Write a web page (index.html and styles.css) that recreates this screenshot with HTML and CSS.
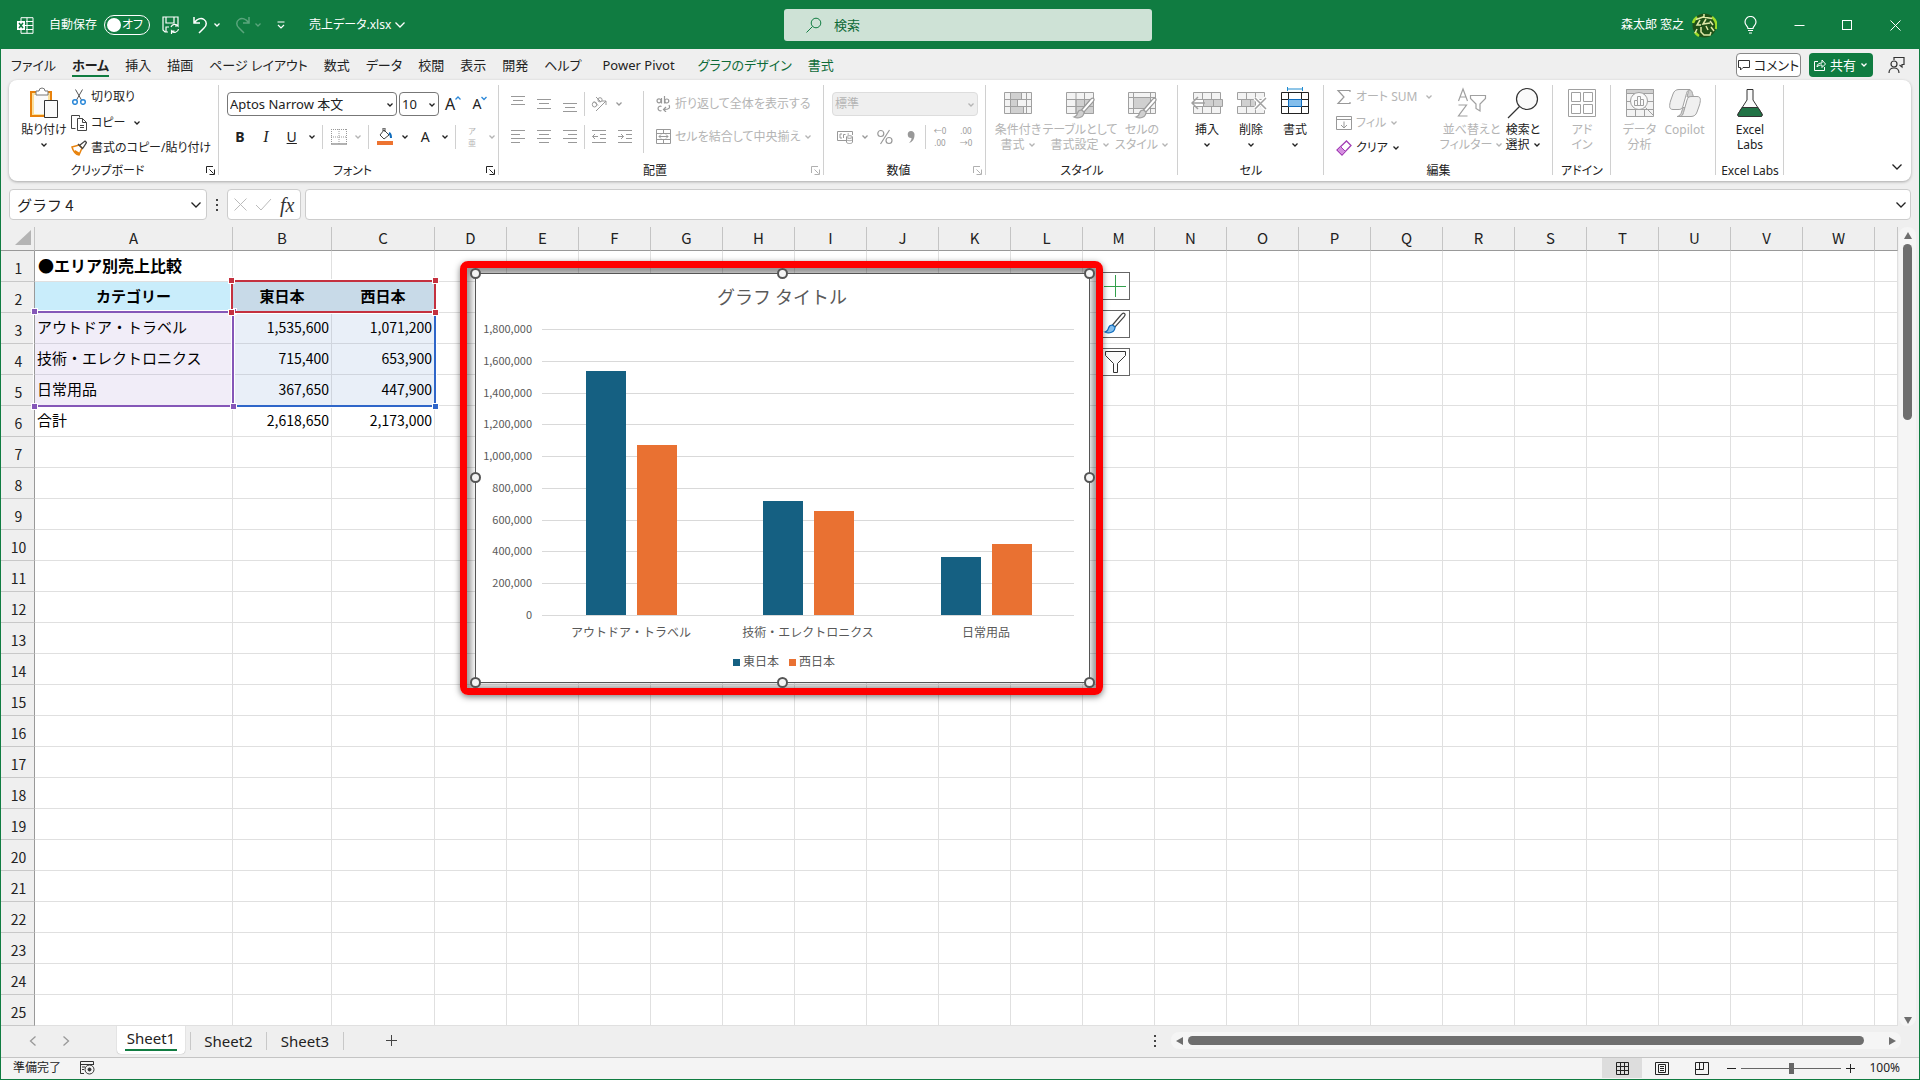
FILE: index.html
```html
<!DOCTYPE html>
<html lang="ja">
<head>
<meta charset="utf-8">
<meta name="viewport" content="width=device-width, initial-scale=1">
<title>売上データ.xlsx</title>
<link rel="stylesheet" href="styles.css">
</head>
<body>
<svg class="defs" aria-hidden="true">
  <symbol id="chev" viewBox="0 0 8 8"><path d="M1.5 2.5 4 5l2.5-2.5" fill="none" stroke="currentColor" stroke-width="1.3"/></symbol>
  <symbol id="chev-lg" viewBox="0 0 12 12"><path d="M1.5 3.5 6 8l4.500-4.500" fill="none" stroke="currentColor" stroke-width="1.3"/></symbol>
  <symbol id="launch" viewBox="0 0 9 9"><path d="M.5 7V.5H7M3.500 3.500l4 4M8.500 3.500v5h-5" fill="none" stroke="currentColor"/></symbol>
  <symbol id="brush" viewBox="0 0 24 24"><path d="M21.500 1.500c1 .8.600 2-.5 3.300L12 15l-2.500-2L18 3c1-1.300 2.500-2.200 3.500-1.500z" fill="#fff" stroke="currentColor" stroke-width="1.200"/><path d="M9.500 13c-2 0-3.500 1-4 3-.4 2-1.500 3.500-3.500 4 4 2 10 .5 10-5z" class="tip" stroke-width="1.200"/></symbol>
</svg>
<div class="window">

<header class="titlebar">
  <div class="title-left">
    <svg class="app-icon" width="17" height="17" viewBox="0 0 17 17" fill="none" stroke="#fff"><path d="M4 4V.7h12v15.600H4V13M10 .7v15.600M4 8.500h12M9 4.500h7M9 12.500h7"/><path d="M0 4h8v9H0z" fill="#fff" stroke="none"/><path d="m2 6 4 5M6 6l-4 5" stroke="#107c41" stroke-width="1.500"/></svg>
    <label class="autosave">自動保存<span class="toggle"><input type="checkbox" class="toggle-box"><span class="toggle-text">オフ</span></span></label>
    <button class="tb-btn save" aria-label="保存"><svg width="18" height="18" viewBox="0 0 18 18" fill="none" stroke="#fff" stroke-width="1.200"><path d="M6 16H3L1 14V1h15v6M4 1v6h8V1M4 16v-5h3M9 11a4 4 0 0 1 7-1v-3m0 3h-3M16.500 13a4 4 0 0 1-7 2v3m0-3h3"/></svg></button>
    <button class="tb-btn undo" aria-label="元に戻す"><svg width="18" height="18" viewBox="0 0 18 18" fill="none" stroke="#fff" stroke-width="1.500"><path d="M2 1v6h6M2 7c3-4 7-5.500 10-3.500s3 6 0 8.500l-5 5"/></svg><svg width="8" height="8"><use href="#chev"/></svg></button>
    <button class="tb-btn redo" aria-label="やり直し" disabled><svg width="18" height="18" viewBox="0 0 18 18" fill="none" stroke="currentColor" stroke-width="1.500"><path d="M16 1v6h-6M16 7c-3-4-7-5.500-10-3.500s-3 6 0 8.500l5 5"/></svg><svg width="8" height="8"><use href="#chev"/></svg></button>
    <button class="tb-btn custom" aria-label="クイック アクセス ツール バーのカスタマイズ"><svg width="8" height="8" viewBox="0 0 8 8" fill="none" stroke="#fff" stroke-width="1.200"><path d="M.5 1h7M1 4l3 3 3-3"/></svg></button>
    <button class="tb-btn filename">売上データ.xlsx<svg width="12" height="12"><use href="#chev-lg"/></svg></button>
  </div>
  <label class="search"><svg width="16" height="16" viewBox="0 0 16 16" fill="none" stroke="#107c41"><circle cx="10" cy="6" r="4.800"/><path d="m6.500 9.500-6 6"/></svg><input type="search" placeholder="検索" aria-label="検索"></label>
  <div class="title-right">
    <span class="user">森太郎 窓之</span>
    <svg class="avatar" width="25" height="25" viewBox="0 0 25 25"><circle cx="12.500" cy="12.500" r="12" fill="#1f5117"/><path d="M1 10a12 12 0 0 1 4-6M20 4a12 12 0 0 1 4 12M3 19a12 12 0 0 0 4 4" fill="none" stroke="#9fdc2a" stroke-width="2.500"/><g fill="none" stroke="#dfe9a8" stroke-width="1.500"><path d="M12 1v3M4 6.500 11 4l9 1.500M8 7l-3 5h4M14 6l-3 5 7-1M18 8l3 4M5 16l-2 4M9 14v5l3 3h6l1-3M14 13l2 4M19 14l3 4"/></g></svg>
    <button class="win-btn" aria-label="ヒント"><svg width="14" height="18" viewBox="0 0 14 18" fill="none" stroke="#fff" stroke-width="1.200"><path d="M4 12.500c0-2.500-3-3-3-6.500a5.500 5.500 0 0 1 11 0c0 3.500-3 4-3 6.500zM4 14.500h5M5 17h3"/></svg></button>
    <button class="win-btn" aria-label="最小化"><svg width="11" height="11" viewBox="0 0 11 11" stroke="#fff"><path d="M.5 5.500h10"/></svg></button>
    <button class="win-btn" aria-label="最大化"><svg width="11" height="11" viewBox="0 0 11 11" fill="none" stroke="#fff"><rect x=".5" y=".5" width="9" height="9"/></svg></button>
    <button class="win-btn" aria-label="閉じる"><svg width="11" height="11" viewBox="0 0 11 11" stroke="#fff"><path d="m.5.5 10 10m0-10-10 10"/></svg></button>
  </div>
</header>

<nav class="tabs">
  <a href="#">ファイル</a><a href="#" class="active">ホーム</a><a href="#">挿入</a><a href="#">描画</a><a href="#">ページ レイアウト</a><a href="#">数式</a><a href="#">データ</a><a href="#">校閲</a><a href="#">表示</a><a href="#">開発</a><a href="#">ヘルプ</a><a href="#" class="latin">Power Pivot</a><a href="#" class="context">グラフのデザイン</a><a href="#" class="context">書式</a>
  <div class="tabs-right">
    <button class="comment"><svg width="12" height="12" viewBox="0 0 12 12" fill="none" stroke="#333"><path d="M.5 1.500h11v7H5l-2.500 2.500V8.500h-2z"/></svg>コメント</button>
    <button class="share"><svg width="12" height="12" viewBox="0 0 12 12" fill="none" stroke="#fff"><path d="M4 2.500H.5v9h10V8M3 8c0-3 2-4 5-4V1l3.500 4L8 8.500V6C6 6 4 6.500 3 8z"/></svg>共有<svg width="8" height="8"><use href="#chev"/></svg></button>
    <button class="person" aria-label="プレゼンス"><svg width="17" height="18" viewBox="0 0 17 18" fill="none" stroke="#333" stroke-width="1.200"><path d="M6 4V1.500h10v7h-2V11l-2.500-2"/><circle cx="6" cy="8" r="3"/><path d="M1 17c0-3.500 2-5 5-5s5 1.500 5 5"/></svg></button>
  </div>
</nav>

<section class="ribbon">
  <div class="group clipboard">
    <div class="group-body">
      <button class="big"><svg width="32" height="32" viewBox="0 0 32 32"><path d="M3 5h20v24H3z" fill="#fbdf9b" stroke="#e8820c" stroke-width="2"/><path d="M6 8h14v19H6z" fill="#fafafa"/><path d="M8 8V4h3a3 3 0 0 1 6 0h3v4z" fill="#fff" stroke="#777"/><path d="M16.500 13.500h13v17h-13z" fill="#fafafa" stroke="#333"/></svg><span>貼り付け</span><svg width="8" height="8"><use href="#chev"/></svg></button>
      <div class="rows3">
        <button class="small"><svg width="16" height="16" viewBox="0 0 16 16" fill="none"><path d="m4.500.5 6 10.500M11.500.5 5.500 11" stroke="#555"/><circle cx="4" cy="13" r="2.300" stroke="#2b88d8" stroke-width="1.500"/><circle cx="12" cy="13" r="2.300" stroke="#2b88d8" stroke-width="1.500"/></svg>切り取り</button>
        <button class="small"><svg width="16" height="16" viewBox="0 0 16 16" fill="none" stroke="#444"><path d="M4.500 13.500h-4V.5h8v2M6.500 3.500h5l4 4v8h-9zM11.500 3.500v4h4M9 10.500h4M9 12.500h4"/></svg>コピー<svg class="gap-chev" width="8" height="8"><use href="#chev"/></svg></button>
        <button class="small"><svg width="16" height="16" viewBox="0 0 16 16"><path d="m1 7 7-2 3 3-3 7c-3 0-6-4-7-8z" fill="#fff" stroke="#e8820c" stroke-width="1.500"/><path d="m4 10 5 3-1 2-5-3z" fill="#e8820c"/><path d="m7 4 5 5M9 5l5-4 1.500 1.500L12 8" fill="none" stroke="#444" stroke-width="1.300"/></svg>書式のコピー/貼り付け</button>
      </div>
    </div>
    <div class="group-label has-launch"><span>クリップボード</span><button aria-label="クリップボードの設定"><svg width="9" height="9"><use href="#launch"/></svg></button></div>
  </div>

  <div class="group font">
    <div class="group-body rows2">
      <div class="line">
        <span class="combo font-name"><select aria-label="フォント"><option>Aptos Narrow 本文</option></select><svg width="8" height="8"><use href="#chev"/></svg></span>
        <span class="combo font-size"><select aria-label="フォント サイズ"><option>10</option></select><svg width="8" height="8"><use href="#chev"/></svg></span>
        <button class="ico grow">A<svg width="6" height="5" viewBox="0 0 6 5" fill="none" stroke="#2b88d8" stroke-width="1.300"><path d="m.5 3.500 2.500-2.500 2.500 2.500"/></svg></button>
        <button class="ico shrink">A<svg width="6" height="5" viewBox="0 0 6 5" fill="none" stroke="#2b88d8" stroke-width="1.300"><path d="m.5 1 2.500 2.500L5.500 1"/></svg></button>
      </div>
      <div class="line">
        <button class="ico"><b>B</b></button>
        <button class="ico italic"><i>I</i></button>
        <button class="ico"><u>U</u></button>
        <button class="dd" aria-label="下線"><svg width="8" height="8"><use href="#chev"/></svg></button>
        <i class="sep"></i>
        <button class="ico off" disabled aria-label="罫線"><svg width="16" height="16" viewBox="0 0 16 16" fill="none" stroke="#999"><path d="M.5 0v15M15.500 0v15M0 .5h16M0 8h16M8 0v15" stroke-dasharray="1 1"/><path d="M0 15h16" stroke-width="1.500"/></svg></button>
        <button class="dd off" disabled aria-label="罫線の種類"><svg width="8" height="8"><use href="#chev"/></svg></button>
        <i class="sep"></i>
        <button class="ico" aria-label="塗りつぶし"><svg width="16" height="17" viewBox="0 0 16 17"><path d="m7 2 5 5-5 4-4-4zM6 3V0h2v4" fill="none" stroke="#444"/><path d="M12 5c2 1 2 3 2 5" fill="none" stroke="#0f6cbd" stroke-width="2"/><path d="M0 13h16v4H0z" fill="#ed7331"/></svg></button>
        <button class="dd" aria-label="塗りつぶしの色"><svg width="8" height="8"><use href="#chev"/></svg></button>
        <button class="ico">A</button>
        <button class="dd" aria-label="フォントの色"><svg width="8" height="8"><use href="#chev"/></svg></button>
        <i class="sep"></i>
        <button class="ico off ruby" disabled><span>ア</span><span>亜</span></button>
        <button class="dd off" disabled aria-label="ふりがな"><svg width="8" height="8"><use href="#chev"/></svg></button>
      </div>
    </div>
    <div class="group-label has-launch"><span>フォント</span><button aria-label="フォントの設定"><svg width="9" height="9"><use href="#launch"/></svg></button></div>
  </div>

  <div class="group align">
    <div class="group-body">
      <div class="rows2 align-icons off">
        <div class="line">
          <button class="ico" disabled aria-label="上揃え"><svg width="14" height="16" viewBox="0 0 14 16" stroke="currentColor"><path d="M0 .5h14M2 4.500h10M0 8.500h14"/></svg></button>
          <button class="ico" disabled aria-label="上下中央揃え"><svg width="14" height="16" viewBox="0 0 14 16" stroke="currentColor"><path d="M0 3.500h14M2 7.500h10M0 12.500h14"/></svg></button>
          <button class="ico" disabled aria-label="下揃え"><svg width="14" height="16" viewBox="0 0 14 16" stroke="currentColor"><path d="M0 7.500h14M2 11.500h10M0 15.500h14"/></svg></button>
          <i class="sep"></i>
          <button class="ico" disabled aria-label="方向"><svg width="16" height="16" viewBox="0 0 16 16" fill="none" stroke="currentColor"><path d="M5 15 15 5M11 5h4v4"/><ellipse cx="3.500" cy="8.500" rx="2.200" ry="2.500"/><path d="m3 5.500 4 4"/><path d="m5 1 5 5"/><circle cx="9" cy="3.800" r="2.100"/></svg></button>
          <button class="dd" disabled aria-label="方向の種類"><svg width="8" height="8"><use href="#chev"/></svg></button>
        </div>
        <div class="line">
          <button class="ico" disabled aria-label="左揃え"><svg width="14" height="14" viewBox="0 0 14 14" stroke="currentColor"><path d="M0 .5h14M0 4.500h9M0 8.500h14M0 12.500h9"/></svg></button>
          <button class="ico" disabled aria-label="中央揃え"><svg width="14" height="14" viewBox="0 0 14 14" stroke="currentColor"><path d="M0 .5h14M2 4.500h10M0 8.500h14M2 12.500h10"/></svg></button>
          <button class="ico" disabled aria-label="右揃え"><svg width="14" height="14" viewBox="0 0 14 14" stroke="currentColor"><path d="M0 .5h14M5 4.500h9M0 8.500h14M5 12.500h9"/></svg></button>
          <i class="sep"></i>
          <button class="ico" disabled aria-label="インデント減"><svg width="14" height="14" viewBox="0 0 14 14" fill="none" stroke="currentColor"><path d="M0 .5h14M8 4.500h6M8 8.500h6M0 12.500h14M6 6.500H.5M3 4 .5 6.500 3 9"/></svg></button>
          <button class="ico" disabled aria-label="インデント増"><svg width="14" height="14" viewBox="0 0 14 14" fill="none" stroke="currentColor"><path d="M0 .5h14M8 4.500h6M8 8.500h6M0 12.500h14M0 6.500h5.500M3 4l2.500 2.500L3 9"/></svg></button>
        </div>
      </div>
      <div class="rows2 wrap-col off">
        <button class="small" disabled><svg width="15" height="16" viewBox="0 0 15 16" fill="none" stroke="#999" stroke-width="1.200"><circle cx="3" cy="4.800" r="2"/><path d="M5.500 2v5.500M8.500 0v7.500"/><circle cx="10.800" cy="5" r="2"/><path d="M5.500 10.500a2.300 2.300 0 1 0 0 4M13 9c1.500 3 0 4.500-5 4.500M10 11l-2.500 2.500L10 16"/></svg>折り返して全体を表示する</button>
        <button class="small" disabled><svg width="15" height="15" viewBox="0 0 15 15" fill="none" stroke="#999"><path d="M.5.5h14v14H.5zM.5 4.500h14M.5 10.500h14M7.500.5v4M7.500 10.500v4M3 7.500h9M5 5.500l-2 2 2 2M10 5.500l2 2-2 2"/></svg>セルを結合して中央揃え<svg class="gap-chev" width="8" height="8"><use href="#chev"/></svg></button>
      </div>
    </div>
    <div class="group-label has-launch off-launch"><span>配置</span><button aria-label="配置の設定"><svg width="9" height="9"><use href="#launch"/></svg></button></div>
  </div>

  <div class="group number">
    <div class="group-body rows2 off">
      <div class="line"><span class="combo format"><select aria-label="表示形式" disabled><option>標準</option></select><svg width="8" height="8"><use href="#chev"/></svg></span></div>
      <div class="line">
        <button class="ico" disabled aria-label="通貨"><svg width="17" height="14" viewBox="0 0 17 14" fill="none" stroke="currentColor"><path d="M9 10.500H.5v-9h15V5M5 4H3v4h2M6.500 8V4.500h2M10.500 4H12"/><path d="M9.500 7v5c0 2 6 2 6 0V7M9.500 9.500c0 1.500 6 1.500 6 0"/><ellipse cx="12.500" cy="7" rx="3" ry="1.300"/></svg></button>
        <button class="dd" disabled aria-label="通貨の種類"><svg width="8" height="8"><use href="#chev"/></svg></button>
        <button class="ico" disabled aria-label="パーセント"><svg width="16" height="16" viewBox="0 0 16 16" fill="none" stroke="currentColor" stroke-width="1.200"><circle cx="3.800" cy="4.500" r="3"/><circle cx="12" cy="11.500" r="3"/><path d="M12.500 1 3.500 15"/></svg></button>
        <button class="ico" disabled aria-label="桁区切り"><svg width="8" height="14" viewBox="0 0 8 14" fill="currentColor"><path d="M4 1a3.500 3.500 0 0 1 3.500 4c0 4-2 7-5.500 8 2-2 2.500-3.500 2.500-5A3.500 3.500 0 1 1 4 1z"/></svg></button>
        <i class="sep"></i>
        <button class="ico dec" disabled><span>←0</span><span>.00</span></button>
        <button class="ico dec" disabled><span>.00</span><span>→0</span></button>
      </div>
    </div>
    <div class="group-label has-launch off-launch"><span>数値</span><button aria-label="数値の設定"><svg width="9" height="9"><use href="#launch"/></svg></button></div>
  </div>

  <div class="group styles">
    <div class="group-body off">
      <button class="big" disabled><svg width="32" height="32" viewBox="0 0 32 32" fill="none" stroke="#a0a0a0"><path d="M2.500 5.500h27v21h-27z" fill="#f3f3f3"/><path d="M8.500 5.500h11v7h-11zM8.500 12.500h7v7h-7zM8.500 19.500h13v7h-13z" fill="#d0d0d0"/><path d="M24.500 5.500v21M2.500 12.500h27M2.500 19.500h27"/></svg><span>条件付き<br>書式<svg width="8" height="8"><use href="#chev"/></svg></span></button>
      <button class="big" disabled><svg width="32" height="32" viewBox="0 0 32 32" fill="none" stroke="#a0a0a0"><path d="M2.500 5.500h27v21h-27z" fill="#f3f3f3"/><path d="M12 12.500h17.500v14H12z" fill="#d0d0d0"/><path d="M12 5.500v21M20.500 5.500v21M2.500 12.500h27M2.500 19.500h27"/><use href="#brush" class="grey-tip" x="8" y="10" width="24" height="24"/></svg><span>テーブルとして<br>書式設定<svg width="8" height="8"><use href="#chev"/></svg></span></button>
      <button class="big" disabled><svg width="32" height="32" viewBox="0 0 32 32" fill="none" stroke="#a0a0a0"><path d="M2.500 5.500h27v21h-27z" fill="#f3f3f3"/><path d="M7.500 10.500h17v11h-17z" fill="#d0d0d0"/><path d="M7.500 5.500v21M24.500 5.500v21M2.500 10.500h27M2.500 21.500h27"/><use href="#brush" class="grey-tip" x="8" y="10" width="24" height="24"/></svg><span>セルの<br>スタイル<svg width="8" height="8"><use href="#chev"/></svg></span></button>
    </div>
    <div class="group-label"><span>スタイル</span></div>
  </div>

  <div class="group cells">
    <div class="group-body">
      <button class="big"><svg width="32" height="32" viewBox="0 0 32 32" fill="none" stroke="#a0a0a0"><path d="M2.500 5.500h27v7h-27zM2.500 19.500h27v7h-27zM11.500 5.500v7M20.500 5.500v7M11.500 19.500v7M20.500 19.500v7" fill="#f3f3f3"/><path d="M12.500 12.500h19v7h-19zM22.500 12.500v7" fill="#d0d0d0"/><path d="M14 16H1M7 10l-6 6 6 6" stroke-width="1.500"/></svg><span>挿入</span><svg width="8" height="8"><use href="#chev"/></svg></button>
      <button class="big"><svg width="32" height="32" viewBox="0 0 32 32" fill="none" stroke="#a0a0a0"><path d="M2.500 5.500h27v7h-27zM2.500 19.500h27v7h-27zM11.500 5.500v7M20.500 5.500v7M11.500 19.500v7M20.500 19.500v7" fill="#f3f3f3"/><path d="M6.500 12.500h14v7h-14zM15.500 12.500v7" fill="#d0d0d0"/><path d="m20 11 11 11m0-11L20 22" stroke="#fff" stroke-width="4"/><path d="m20 11 11 11m0-11L20 22" stroke-width="1.500"/></svg><span>削除</span><svg width="8" height="8"><use href="#chev"/></svg></button>
      <button class="big"><svg width="32" height="32" viewBox="0 0 32 32" fill="none" stroke="#222"><path d="M2.500 5.500h27v21h-27zM9.500 5.500v21M22.500 5.500v21M2.500 12.500h27M2.500 19.500h27"/><path d="M9.500 12.500h13v7h-13z" fill="#83beec" stroke="#0f6cbd"/><path d="M8.500 2h15M8.500 0v4M23.500 0v4" stroke="#1e8bd0"/></svg><span>書式</span><svg width="8" height="8"><use href="#chev"/></svg></button>
    </div>
    <div class="group-label"><span>セル</span></div>
  </div>

  <div class="group edit">
    <div class="group-body">
      <div class="rows3">
        <button class="small off" disabled><svg width="16" height="16" viewBox="0 0 16 16" fill="none" stroke="#999" stroke-width="1.200"><path d="M14 3V1.500H2L8 8l-6 6.500h12V13"/></svg>オート SUM<svg class="gap-chev" width="8" height="8"><use href="#chev"/></svg></button>
        <button class="small off" disabled><svg width="16" height="16" viewBox="0 0 16 16" fill="none" stroke="#999"><path d="M.5 1.500h15v13H.5zM.5 4.500h15M8 6.500v6M5 10l3 3 3-3"/></svg>フィル<svg width="8" height="8"><use href="#chev"/></svg></button>
        <button class="small"><svg width="16" height="16" viewBox="0 0 16 16"><path d="M10.500 1 15 5.500 6 15 1 10z" fill="#fff" stroke="#a33fb5" stroke-width="1.300"/><path d="m4.500 6.500 5 5L6 15l-5-5z" fill="#d58fe0" stroke="#a33fb5"/></svg>クリア<svg width="8" height="8"><use href="#chev"/></svg></button>
      </div>
      <button class="big off" disabled><svg width="32" height="32" viewBox="0 0 32 32" fill="none" stroke="#a0a0a0" stroke-width="1.200"><path d="m2.500 14 4.500-12 4.500 12M4 10h6M2.500 18h8l-8 11h9M14.500 8.500h15v3L24 17v7l-4-2.500V17l-5.500-5.500z"/></svg><span>並べ替えと<br>フィルター<svg width="8" height="8"><use href="#chev"/></svg></span></button>
      <button class="big"><svg width="32" height="32" viewBox="0 0 32 32" fill="#fafafa" stroke="#333" stroke-width="1.200"><circle cx="20" cy="12" r="10.500"/><path d="M12.500 19.500 1 31"/></svg><span>検索と<br>選択<svg width="8" height="8"><use href="#chev"/></svg></span></button>
    </div>
    <div class="group-label"><span>編集</span></div>
  </div>

  <div class="group addin">
    <div class="group-body off"><button class="big" disabled><svg width="32" height="32" viewBox="0 0 32 32" fill="none" stroke="#a0a0a0"><path d="M2.500 2.500h27v27h-27zM5.500 5.500h9v9h-9zM17.500 5.500h9v9h-9zM5.500 17.500h9v9h-9zM17.500 17.500h9v9h-9z"/></svg><span>アド<br>イン</span></button></div>
    <div class="group-label"><span>アドイン</span></div>
  </div>

  <div class="group analysis">
    <div class="group-body off">
      <button class="big" disabled><svg width="32" height="32" viewBox="0 0 32 32" fill="none" stroke="#a0a0a0"><path d="M2.500 2.500h27v27h-27z" fill="#f3f3f3"/><path d="M2.500 2.500h27v4h-27z" fill="#d0d0d0"/><path d="M2.500 14.500h27M2.500 22.500h27M11.500 22.500v7M20.500 22.500v7"/><circle cx="15" cy="14" r="8.500" fill="#fafafa"/><path d="m21.500 20.500 8 8M10.500 18.500v-5h3v-4h3v3h3v6zM13.500 18.500v-5M16.500 18.500v-6"/></svg><span>データ<br>分析</span></button>
      <button class="big" disabled><svg width="32" height="32" viewBox="0 0 32 32" stroke="#a0a0a0" fill="#f0f0f0"><path d="M8 29.500h12l3-9h-9l-2 6c-1 2-3 3-4 3z" fill="#d0d0d0"/><path d="M10 2.500h11c-2 0-3 2-3.500 4L14 19c-1 3-2 3.500-5 3.500H4C-.5 22.500.5 18 1.500 14L4 7c1-3 3-4.500 6-4.500z"/><path d="M16 2.500h3c3 0 4 1.500 4.500 4L24.500 10H18l1-4c.5-2 1-3.500 2-3.500z" fill="#d0d0d0"/><path d="M22 29.500H11c2 0 3-2 3.500-4L18 13c1-3 2-3.500 5-3.500h5c4.500 0 3.500 4.500 2.500 8.500L28 25c-1 3-3 4.500-6 4.500z"/></svg><span>Copilot</span></button>
    </div>
    <div class="group-label"></div>
  </div>

  <div class="group labs">
    <div class="group-body"><button class="big"><svg width="32" height="32" viewBox="0 0 32 32"><path d="M13 2.500h6V13l9 14c.5 1.500 0 2.500-1.500 2.500h-21C4 29.500 3.500 28.500 4 27l9-14z" fill="#fafafa" stroke="#333"/><path d="M8 20.500h16l4 6.500c.5 1.500 0 2.500-1.500 2.500h-21C4 29.500 3.500 28.500 4 27z" fill="#217346" stroke="#333"/></svg><span>Excel<br>Labs</span></button></div>
    <div class="group-label"><span>Excel Labs</span></div>
  </div>
  <button class="collapse" aria-label="リボンを折りたたむ"><svg width="12" height="12"><use href="#chev-lg"/></svg></button>
</section>

<div class="formula-row">
  <div class="box name-box"><input type="text" value="グラフ 4" aria-label="名前ボックス"><svg width="12" height="12"><use href="#chev-lg"/></svg></div>
  <svg class="grip" width="3" height="13" fill="#444"><path d="M0 1h2v2H0zM0 6h2v2H0zM0 11h2v2H0z"/></svg>
  <div class="box fx-box">
    <svg width="13" height="13" viewBox="0 0 13 13" stroke="#bbb"><path d="m.5.5 12 12m0-12-12 12"/></svg>
    <svg width="17" height="13" viewBox="0 0 17 13" fill="none" stroke="#bbb"><path d="m1 7 5 5L16 1"/></svg>
    <button class="fx">fx</button>
  </div>
  <div class="box formula"><input type="text" aria-label="数式バー"><svg width="12" height="12"><use href="#chev-lg"/></svg></div>
</div>

<main class="work">
  <div class="sheet">
    <table class="grid"><colgroup id="cols"></colgroup><thead><tr id="head"></tr></thead><tbody id="rows"></tbody></table>
    <div class="range blue"><i></i><i></i><i></i><i></i></div>
    <div class="range purple"><i></i><i></i><i></i><i></i></div>
    <div class="range red"><i></i><i></i><i></i><i></i></div>
    <div class="chart-tools">
      <button aria-label="グラフ要素"><svg width="24" height="24" viewBox="0 0 24 24" stroke="#33a04c"><path d="M1 12.500h22M12.500 1v22"/></svg></button>
      <button aria-label="グラフ スタイル"><svg width="24" height="24" viewBox="0 0 24 24" class="blue-tip"><use href="#brush"/></svg></button>
      <button aria-label="グラフ フィルター"><svg width="24" height="24" viewBox="0 0 24 24" fill="#fafafa" stroke="#333"><path d="M2.500 1.500h20v4l-8 8v9h-4v-9l-8-8z"/></svg></button>
    </div>
    <div class="chart-frame">
      <svg class="chart" width="614" height="409" viewBox="0 0 614 409" id="chart"></svg>
    </div>
  </div>
  <div class="vscroll"><i class="arrow up"></i><i class="thumb"></i><i class="arrow down"></i></div>
</main>

<div class="sheetbar">
  <div class="sheet-nav"><button aria-label="前のシート"><svg width="8" height="12" viewBox="0 0 8 12" fill="none" stroke="#999" stroke-width="1.300"><path d="M6.500 1.500 1.500 6l5 4.500"/></svg></button><button aria-label="次のシート"><svg width="8" height="12" viewBox="0 0 8 12" fill="none" stroke="#999" stroke-width="1.300"><path d="m1.500 1.500 5 4.500-5 4.500"/></svg></button></div>
  <button class="sheet-tab current"><span>Sheet1</span></button>
  <button class="sheet-tab">Sheet2</button>
  <button class="sheet-tab">Sheet3</button>
  <button class="add" aria-label="新しいシート"><svg width="11" height="11" viewBox="0 0 11 11" stroke="#444"><path d="M0 5.500h11M5.500 0v11"/></svg></button>
  <svg class="grip" width="3" height="13" fill="#444"><path d="M0 1h2v2H0zM0 6h2v2H0zM0 11h2v2H0z"/></svg>
  <div class="hscroll"><i class="arrow left"></i><i class="thumb"></i><i class="arrow right"></i></div>
</div>

<footer class="status">
  <span>準備完了</span>
  <svg class="macro" width="15" height="14" viewBox="0 0 15 14" fill="none" stroke="#333"><path d="M4 12.500H.5V.5h13V4M.5 3.500h13M2 6h3M2 8.500h2"/><circle cx="9.500" cy="8.500" r="4.500"/><circle cx="9.500" cy="8.500" r="1.500" fill="#333"/></svg>
  <div class="views">
    <button class="on" aria-label="標準"><svg width="13" height="13" viewBox="0 0 13 13" fill="none" stroke="#222"><path d="M.5.5h12v12H.5zM4.500.5v12M8.500.5v12M.5 4.500h12M.5 8.500h12"/></svg></button>
    <button aria-label="ページ レイアウト"><svg width="14" height="13" viewBox="0 0 14 13" fill="none" stroke="#222"><path d="M.5.5h13v12H.5zM3.500 2.500h7v8h-7zM5 4.500h4M5 6.500h4M5 8.500h4"/></svg></button>
    <button aria-label="改ページ プレビュー"><svg width="14" height="13" viewBox="0 0 14 13" fill="none" stroke="#222"><path d="M.5.5h13v12H.5zM.5 7.500h8v-7M4.500.5v7"/></svg></button>
  </div>
  <button class="zoom-btn" aria-label="縮小"><svg width="9" height="9" viewBox="0 0 9 9" stroke="#222"><path d="M0 4.500h9"/></svg></button>
  <input class="zoom" type="range" min="0" max="100" value="50" aria-label="ズーム">
  <button class="zoom-btn" aria-label="拡大"><svg width="9" height="9" viewBox="0 0 9 9" stroke="#222"><path d="M0 4.500h9M4.500 0v9"/></svg></button>
  <span class="percent">100%</span>
</footer>
</div>
<script src="sheet.js"></script>
</body>
</html>
```
FILE: styles.css
```css
* { box-sizing: border-box; }
body { margin: 0; font: 12px/16px "Noto Sans", "Noto Sans CJK JP", sans-serif; color: #222; font-feature-settings: "palt"; }
button, input, select { font: inherit; color: inherit; font-feature-settings: inherit; background: none; border: 0; padding: 0; margin: 0; }
button { display: flex; align-items: center; white-space: nowrap; }
svg { display: block; flex: none; }
i { font-style: normal; }
.defs { display: none; }
.window { min-height: 100vh; display: flex; flex-direction: column; background: #efefef; border: 1px solid #107c41; overflow: hidden; }
.off { color: #b4b4b4; }

/* title bar */
.titlebar { display: grid; grid-template-columns: minmax(0, 1fr) 368px minmax(0, 1fr); height: 48px; padding-left: 16px; background: #107c41; color: #fff; align-items: center; }
.title-left, .title-right { display: flex; align-items: center; }
.autosave { display: flex; align-items: center; gap: 7px; margin-left: 15px; }
.toggle { display: grid; }
.toggle > * { grid-area: 1 / 1; }
.toggle-box { appearance: none; width: 46px; height: 20px; border: 1px solid #fff; border-radius: 10px; }
.toggle-box::before { content: ""; display: block; width: 14px; height: 14px; margin: 2px; border-radius: 50%; background: #fff; }
.toggle-text { align-self: center; justify-self: end; padding-right: 7px; }
.tb-btn { gap: 3px; margin-left: 12px; }
.redo { color: #5aa57c; }
.custom { margin-left: 15px; }
.filename { margin-left: 24px; }
.search { display: flex; align-items: center; gap: 12px; height: 32px; padding-left: 22px; border-radius: 3px; background: #cee2d6; color: #0e6b38; font-size: 13px; }
.search input { flex: 1; min-width: 0; outline: 0; }
.search input::placeholder { color: #0e6b38; opacity: 1; }
.title-right { justify-content: flex-end; }
.avatar { margin: 0 10px 0 8px; }
.win-btn { width: 48px; height: 48px; justify-content: center; }

/* ribbon tabs */
.tabs { display: flex; align-items: center; gap: 16px; height: 31px; padding: 0 14px 0 10px; font-size: 13px; white-space: nowrap; }
.tabs > a { color: inherit; text-decoration: none; line-height: 20px; padding-top: 2px; border-bottom: 2px solid transparent; }
.tabs > a.active { font-weight: bold; border-color: #107c41; }
.tabs > a.context { color: #0e6b38; }
.tabs > a.latin { padding-left: 5px; padding-right: 7px; }
.tabs-right { display: flex; align-items: center; margin-left: auto; }
.comment, .share { height: 24px; gap: 4px; justify-content: center; border-radius: 4px; }
.comment { width: 65px; border: 1px solid #888; background: #fff; }
.share { width: 64px; margin: 0 15px 0 8px; background: #107c41; color: #fff; font-size: 13px; }

/* ribbon */
.ribbon { display: flex; height: 101px; margin: 0 8px; padding: 1px 0; border-radius: 8px; background: #fff; box-shadow: 0 1px 3px rgba(0, 0, 0, .3); position: relative; }
.group { flex: none; display: flex; flex-direction: column; position: relative; }
.group::after { content: ""; position: absolute; right: 0; top: 4px; bottom: 5px; width: 1px; background: #d0d0d0; }
.group-body { display: flex; height: 80px; }
.group-label { display: flex; align-items: center; height: 19px; }
.group-label span { flex: 1; text-align: center; }
.has-launch { padding-right: 3px; }
.has-launch button { width: 10px; }
.off-launch button { color: #b0b0b0; }
.clipboard { width: 210px; }
.font { width: 280px; }
.align { width: 325px; }
.number { width: 162px; }
.styles { width: 192px; }
.cells { width: 146px; }
.edit { width: 229px; }
.addin { width: 58px; }
.analysis { width: 105px; }
.labs { width: 68px; }

.big { flex-direction: column; padding-top: 6px; line-height: 15px; text-align: center; }
.big > span { margin-top: 3px; }
.big > span + svg { margin-top: 4px; }
.big span svg { display: inline-block; margin-left: 3px; }
.rows3 { display: flex; flex-direction: column; padding-top: 3px; }
.small { height: 26px; gap: 4px; }
.rows2 { display: flex; flex-direction: column; padding-top: 6px; }
.rows2 .small, .line { height: 33px; display: flex; align-items: center; }
.gap-chev { margin-left: 4px; }
.clipboard .big { width: 62px; padding-left: 8px; }
.clipboard .small { gap: 4px; }

.rows2 .line { flex: none; }
.font .group-body { padding-left: 8px; }
.combo { position: relative; display: flex; height: 24px; border: 1px solid #777; border-radius: 4px; background: #fff; }
.combo select { appearance: none; width: 100%; padding: 0 14px 0 2px; outline: 0; opacity: 1; }
.combo svg { position: absolute; right: 2px; top: 8px; pointer-events: none; }
.font-name { width: 170px; margin-right: 2px; font-size: 13px; }
.font-size { width: 40px; font-size: 13px; }
.format { width: 146px; background: #efefef; border-color: #ddd; }
.ico { width: 26px; height: 24px; justify-content: center; font-size: 14px; }
.grow { width: 28px; font-size: 16px; }
.grow svg, .shrink svg { align-self: flex-start; margin-top: 4px; }
.italic { font-family: "Liberation Serif", serif; font-size: 16px; }
.italic i { font-style: italic; }
.dd { width: 14px; height: 24px; justify-content: center; }
.sep { width: 1px; height: 24px; margin: 0 3px; background: #d0d0d0; }
.ruby { flex-direction: column; font-size: 8px; line-height: 12px; }
.align-icons { width: 154px; padding-left: 6px; position: relative; color: #999; }
.align-icons::after { content: ""; position: absolute; right: 9px; top: 10px; bottom: 8px; width: 1px; background: #d0d0d0; }
.align-icons .sep { margin: 0 1px; }
.wrap-col { padding-left: 3px; }
.wrap-col .small { gap: 4px; }
.wrap-col .gap-chev { margin-left: 0; }
.number .group-body { padding-left: 8px; }
.number .line { color: #999; }
.number .combo { color: #b4b4b4; }
.number .sep { margin: 0 1px; }
.dec { flex-direction: column; font-size: 8px; line-height: 12px; }
.styles .group-body { padding-left: 1px; }
.styles .big { width: 62px; }
.cells .group-body { padding-left: 7px; }
.cells .big { width: 44px; }
.edit .group-body { padding-left: 12px; }
.edit .rows3 { width: 108px; }
.edit .big { width: 55px; }
.edit .big + .big { width: 48px; }
.addin .big, .labs .big { flex: 1; }
.analysis .group-body { padding: 0 6px; }
.analysis .big { width: 45px; }
.collapse { position: absolute; right: 8px; bottom: 8px; }

/* formula bar */
.formula-row { display: flex; align-items: center; padding: 8px 8px 7px; }
.box { display: flex; align-items: center; height: 31px; border: 1px solid #ccc; border-radius: 4px; background: #fff; }
.box input { flex: 1; min-width: 0; outline: 0; }
.name-box { width: 198px; padding: 0 4px 0 7px; font-size: 15px; font-feature-settings: normal; font-family: "Noto Sans CJK JP", sans-serif; }
.formula-row .grip { margin: 0 8px 0 9px; }
.fx-box { width: 74px; padding: 0 5px 0 6px; gap: 8px; margin-right: 4px; }
.fx { font: italic 20px/20px "Liberation Serif", serif; color: #333; }
.formula { flex: 1; padding-right: 3px; }

/* worksheet */
.work { display: grid; grid-template-columns: minmax(0, 1fr) 21px; }
.sheet { position: relative; overflow: hidden; }
.grid { width: 100%; table-layout: fixed; border-collapse: separate; border-spacing: 0; font: 15px/20px "Noto Sans CJK JP", sans-serif; font-feature-settings: normal; color: #000; background: #fff; }
.grid th, .grid td { padding: 0 0 2px; border: solid #e0e0e0; border-width: 0 1px 1px 0; white-space: nowrap; }
.grid thead th { height: 24px; background: #efefef; border-color: #999; border-right-color: #c4c4c4; font-weight: normal; color: #222; }
.grid tbody th { height: 31px; padding: 4px 0 0 2px; background: #efefef; border-color: #c8c8c8; border-right-color: #999; font-weight: normal; color: #222; font-size: 14px; }
.corner { width: 0; height: 0; margin-left: 14px; border: solid transparent; border-width: 0 0 15px 16px; border-bottom-color: #b4b4b4; }
.grid td { overflow: visible; padding: 0 2px 2px; }
.grid td.num { text-align: right; font-size: 14px; }
.grid td.title { font-weight: bold; font-size: 16px; padding-left: 3px; }
.grid td.head { font-weight: bold; text-align: center; background: #c9edfb; border-color: #c9edfb; }
.grid td.series { background: #c8dae8; border-color: #c8dae8; }
.grid td.cat { background: #f1edf8; border-color: #d6d3de; border-right-color: #f1edf8; }
.grid td.val { background: #e9eff8; border-color: #d0d5de; }
.range { position: absolute; border: 2px solid; outline: 1px solid #fff; }
.range i { position: absolute; width: 5px; height: 5px; background: currentColor; outline: 1px solid #fff; }
.range i:nth-child(1) { left: -4px; top: -4px; }
.range i:nth-child(2) { right: -4px; top: -4px; }
.range i:nth-child(3) { left: -4px; bottom: -4px; }
.range i:nth-child(4) { right: -4px; bottom: -4px; }
.red { color: #c4313f; left: 230px; top: 53px; width: 205px; height: 33px; }
.purple { color: #8557b8; left: 33px; top: 84px; width: 200px; height: 96px; border-left-color: transparent; }
.blue { color: #2f66c9; left: 231px; top: 85px; width: 204px; height: 95px; border-left: 0; border-top-color: transparent; }
.blue i:nth-child(-n+3) { display: none; }

.chart-frame { position: absolute; left: 459px; top: 34px; padding: 5px 7px 6px; border: 7px solid #f00; border-radius: 8px; box-shadow: 0 2px 6px rgba(0, 0, 0, .5), inset 0 2px 6px 4px rgba(0, 0, 0, .42); }
.chart { overflow: visible; margin-left: 1px; font: 11px "Noto Sans CJK JP", sans-serif; font-feature-settings: normal; fill: #595959; }
.chart .t { font-size: 18px; }
.chart .c { font-size: 12px; }
.chart-tools { position: absolute; left: 1101px; top: 45px; display: grid; gap: 10px; }
.chart-tools button { width: 28px; height: 28px; padding-left: 0; border: 1px solid #666; background: #fff; color: #444; }
.grey-tip .tip, .grey-tip { color: #999; fill: #d0d0d0; }
.blue-tip { fill: #83beec; color: #444; stroke: #0f6cbd; }

.vscroll { display: flex; flex-direction: column; align-items: center; margin: 0 3px 0 1px; padding: 5px 0 2px; border-radius: 8px; background: #f5f5f5; }
.thumb { background: #6e6e6e; border-radius: 5px; }
.vscroll .thumb { width: 9px; height: 176px; margin: 5px 0 auto; }
.arrow { border: 4px solid transparent; }
.arrow.up { border-top: 0; border-bottom: 7px solid #6e6e6e; }
.arrow.down { border-bottom: 0; border-top: 7px solid #6e6e6e; }
.arrow.left { border-left: 0; border-right: 7px solid #6e6e6e; }
.arrow.right { border-right: 0; border-left: 7px solid #6e6e6e; }

/* sheet tabs and status bar */
.sheetbar { display: flex; align-items: center; height: 31px; padding: 0 18px 2px 0; font-size: 15px; }
.sheet-nav { display: flex; gap: 25px; width: 116px; padding-left: 28px; }
.sheet-tab { justify-content: center; width: 77px; height: 18px; border-right: 1px solid #c8c8c8; }
.sheet-tab.current { align-self: flex-start; width: 68px; height: 28px; margin-right: 5px; padding-bottom: 2px; border: 0; border-radius: 0 0 4px 4px; background: #fff; box-shadow: 0 0 1px #888; }
.sheet-tab.current + .sheet-tab { border-left: 1px solid #c8c8c8; }
.current span { line-height: 22px; padding: 0 2px; border-bottom: 2px solid #107c41; }
.add { margin-left: 42px; margin-right: auto; }
.hscroll { flex: none; display: flex; align-items: center; width: 730px; height: 17px; margin-left: 14px; padding: 0 5px; border-radius: 8px; background: #f5f5f5; }
.hscroll .thumb { width: 676px; height: 9px; margin: 0 auto 0 5px; }
.status { display: flex; align-items: center; flex: 1; padding: 0 19px 1px 12px; border-top: 1px solid #c4c4c4; background: #f4f4f4; }
.macro { margin-left: 19px; }
.views { display: flex; margin-left: auto; align-self: stretch; }
.views button { width: 40px; justify-content: center; }
.views .on { background: #ddd; }
.zoom-btn { margin-left: 5px; }
.zoom { appearance: none; width: 100px; height: 12px; margin: 0 0 0 5px; background: linear-gradient(#666, #666) center / 100% 1px no-repeat; }
.zoom::-webkit-slider-thumb { appearance: none; width: 5px; height: 11px; background: #666; }
.percent { width: 45px; text-align: right; }
```
FILE: sheet.js
```js
const letters = "ABCDEFGHIJKLMNOPQRSTUVW".split("");
const widths = [34, 198, 99, 103].concat(Array(20).fill(72));
const data = {
  1: [["●エリア別売上比較", "title"]],
  2: [["カテゴリー", "head"], ["東日本", "head series"], ["西日本", "head series"]],
  3: [["アウトドア・トラベル", "cat"], ["1,535,600", "num val"], ["1,071,200", "num val"]],
  4: [["技術・エレクトロニクス", "cat"], ["715,400", "num val"], ["653,900", "num val"]],
  5: [["日常用品", "cat"], ["367,650", "num val"], ["447,900", "num val"]],
  6: [["合計", ""], ["2,618,650", "num"], ["2,173,000", "num"]]
};

document.getElementById("cols").innerHTML =
  widths.map(w => `<col style="width:${w}px">`).join("") + "<col>";
document.getElementById("head").innerHTML =
  '<th><div class="corner"></div></th>' + letters.map(l => `<th>${l}</th>`).join("") + "<th></th>";

let html = "";
for (let r = 1; r <= 25; r++) {
  html += `<tr><th>${r}</th>`;
  for (let c = 0; c <= letters.length; c++) {
    const [text, cls] = (data[r] && data[r][c]) || ["", ""];
    html += cls ? `<td class="${cls}">${text}</td>` : `<td>${text}</td>`;
  }
  html += "</tr>";
}
document.getElementById("rows").innerHTML = html;

const base = 342, top0 = 56, max = 1800000;
const y = v => Math.round(base - v / max * (base - top0));
const series = [
  { name: "アウトドア・トラベル", x: 156, v: [1535600, 1071200] },
  { name: "技術・エレクトロニクス", x: 333, v: [715400, 653900] },
  { name: "日常用品", x: 511, v: [367650, 447900] }
];
const colors = ["#156082", "#e97132"];
let s = '<rect x=".5" y=".5" width="614" height="409" fill="#fff" stroke="#555"/>';
s += '<text class="t" x="307" y="31" text-anchor="middle">グラフ タイトル</text>';
for (let v = 0; v <= max; v += 200000) {
  s += `<path d="M67 ${y(v) + 0.5}h532" stroke="#d9d9d9"/>`;
  s += `<text x="57" y="${y(v) + 4}" text-anchor="end">${v.toLocaleString("en-US")}</text>`;
}
series.forEach(g => {
  g.v.forEach((v, i) => {
    s += `<rect x="${g.x - 45 + i * 51}" y="${y(v)}" width="40" height="${base - y(v)}" fill="${colors[i]}"/>`;
  });
  s += `<text class="c" x="${g.x}" y="364" text-anchor="middle">${g.name}</text>`;
});
["東日本", "西日本"].forEach((n, i) => {
  s += `<rect x="${258 + i * 56}" y="386" width="7" height="7" fill="${colors[i]}"/>`;
  s += `<text class="c" x="${268 + i * 56}" y="393">${n}</text>`;
});
[[0, 0], [307, 0], [614, 0], [0, 204], [614, 204], [0, 409], [307, 409], [614, 409]].forEach(([x, yy]) => {
  s += `<circle cx="${x + 0.5}" cy="${yy + 0.5}" r="4.5" fill="#f4f4f4" stroke="#555" stroke-width="2"/>`;
});
document.getElementById("chart").innerHTML = s;
```
